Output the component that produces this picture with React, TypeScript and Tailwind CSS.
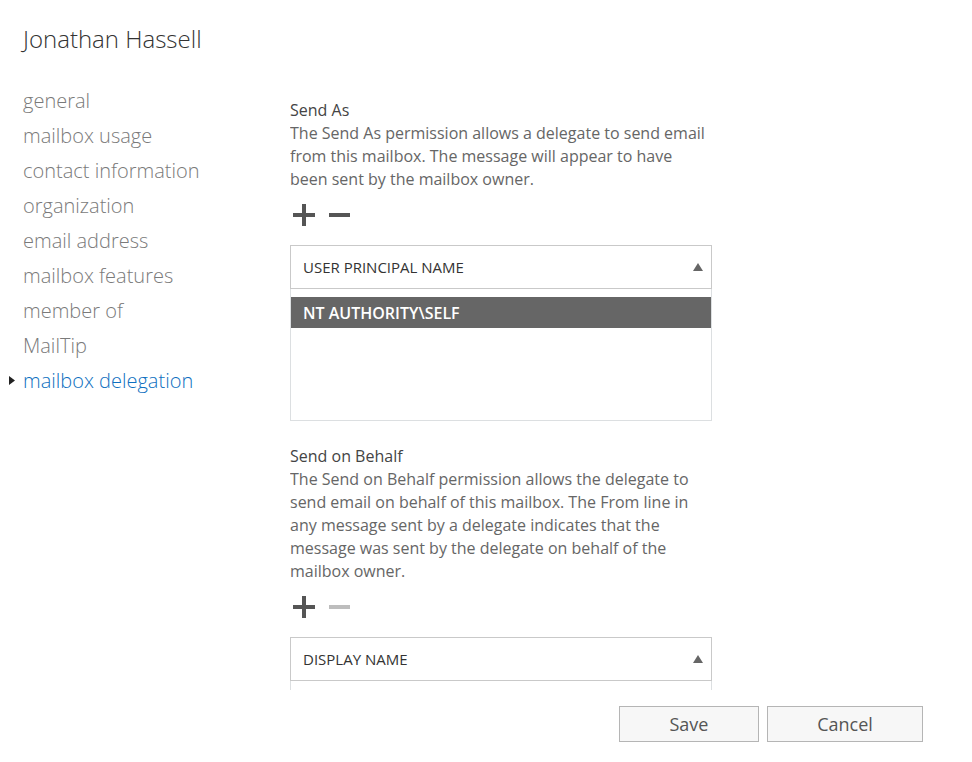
import React from 'react';

const navItems = [
  'general',
  'mailbox usage',
  'contact information',
  'organization',
  'email address',
  'mailbox features',
  'member of',
  'MailTip',
  'mailbox delegation',
];

const PlusMinus: React.FC<{ minusDisabled?: boolean }> = ({ minusDisabled }) => (
  <div className="flex h-6 items-center gap-[14px] pl-[3px]">
    <svg width="22" height="22" viewBox="0 0 22 22" aria-hidden="true">
      <rect x="0" y="9" width="22" height="4" fill="#555" />
      <rect x="9" y="0" width="4" height="22" fill="#555" />
    </svg>
    <svg width="21" height="22" viewBox="0 0 21 22" aria-hidden="true">
      <rect x="0" y="9" width="21" height="4" fill={minusDisabled ? '#bdbdbd' : '#555'} />
    </svg>
  </div>
);

const TableHeader: React.FC<{ label: string }> = ({ label }) => (
  <div className="flex h-[44px] items-center justify-between border border-[#c9c9c9] bg-white pl-[12px] pr-[8px] text-[15px] text-[#333]">
    <span>{label}</span>
    <svg width="10" height="8" viewBox="0 0 10 8" aria-hidden="true">
      <polygon points="5,0 10,8 0,8" fill="#666" />
    </svg>
  </div>
);

export default function App() {
  return (
    <div
      className="h-[762px] w-[972px] overflow-hidden bg-white"
      style={{ fontFamily: '"Open Sans", "Noto Sans", "Liberation Sans", sans-serif' }}
    >
      <h1 className="pl-[23px] pt-[23px] text-[24px] font-light leading-[32px] text-[#333]">Jonathan Hassell</h1>

      <div className="mt-[28px] flex">
        <ul className="w-[290px]">
          {navItems.map((item) => {
            const active = item === 'mailbox delegation';
            return (
              <li
                key={item}
                className={`relative pl-[23px] text-[20px] font-light leading-[35px] ${active ? 'text-[#0e6fc0]' : 'text-[#7a7a7a]'}`}
              >
                {active && (
                  <svg className="absolute left-[9px] top-[13px]" width="6" height="9" viewBox="0 0 6 9" aria-hidden="true">
                    <polygon points="0,0 6,4.5 0,9" fill="#222" />
                  </svg>
                )}
                {item}
              </li>
            );
          })}
        </ul>

        <div className="h-[607px] w-[422px] overflow-hidden pt-[16px]">
          <div className="text-[16px] leading-[23px] text-[#444]">Send As</div>
          <p className="whitespace-nowrap text-[16px] leading-[23px] text-[#666]">
            The Send As permission allows a delegate to send email
            <br />
            from this mailbox. The message will appear to have
            <br />
            been sent by the mailbox owner.
          </p>
          <div className="mt-[12px]">
            <PlusMinus />
          </div>
          <div className="mt-[18px] h-[176px] border border-[#dcdfe1]">
            <div className="-m-px">
              <TableHeader label="USER PRINCIPAL NAME" />
            </div>
            <div className="mt-[9px] flex h-[31px] items-center bg-[#666] pl-[12px] text-[16px] font-semibold text-white">
              NT AUTHORITY\SELF
            </div>
          </div>

          <div className="mt-[24px] text-[16px] leading-[23px] text-[#444]">Send on Behalf</div>
          <p className="whitespace-nowrap text-[16px] leading-[23px] text-[#666]">
            The Send on Behalf permission allows the delegate to
            <br />
            send email on behalf of this mailbox. The From line in
            <br />
            any message sent by a delegate indicates that the
            <br />
            message was sent by the delegate on behalf of the
            <br />
            mailbox owner.
          </p>
          <div className="mt-[12px]">
            <PlusMinus minusDisabled />
          </div>
          <div className="mt-[18px] h-[120px] border border-[#dcdfe1]">
            <div className="-m-px">
              <TableHeader label="DISPLAY NAME" />
            </div>
          </div>
        </div>
      </div>

      <div className="mt-[16px] flex justify-end gap-[8px] pr-[49px]">
        <button className="h-[36px] w-[140px] border border-[#b5b5b5] bg-[#f7f7f7] text-[18px] text-[#555]">Save</button>
        <button className="h-[36px] w-[156px] border border-[#b5b5b5] bg-[#f7f7f7] text-[18px] text-[#555]">Cancel</button>
      </div>
    </div>
  );
}
